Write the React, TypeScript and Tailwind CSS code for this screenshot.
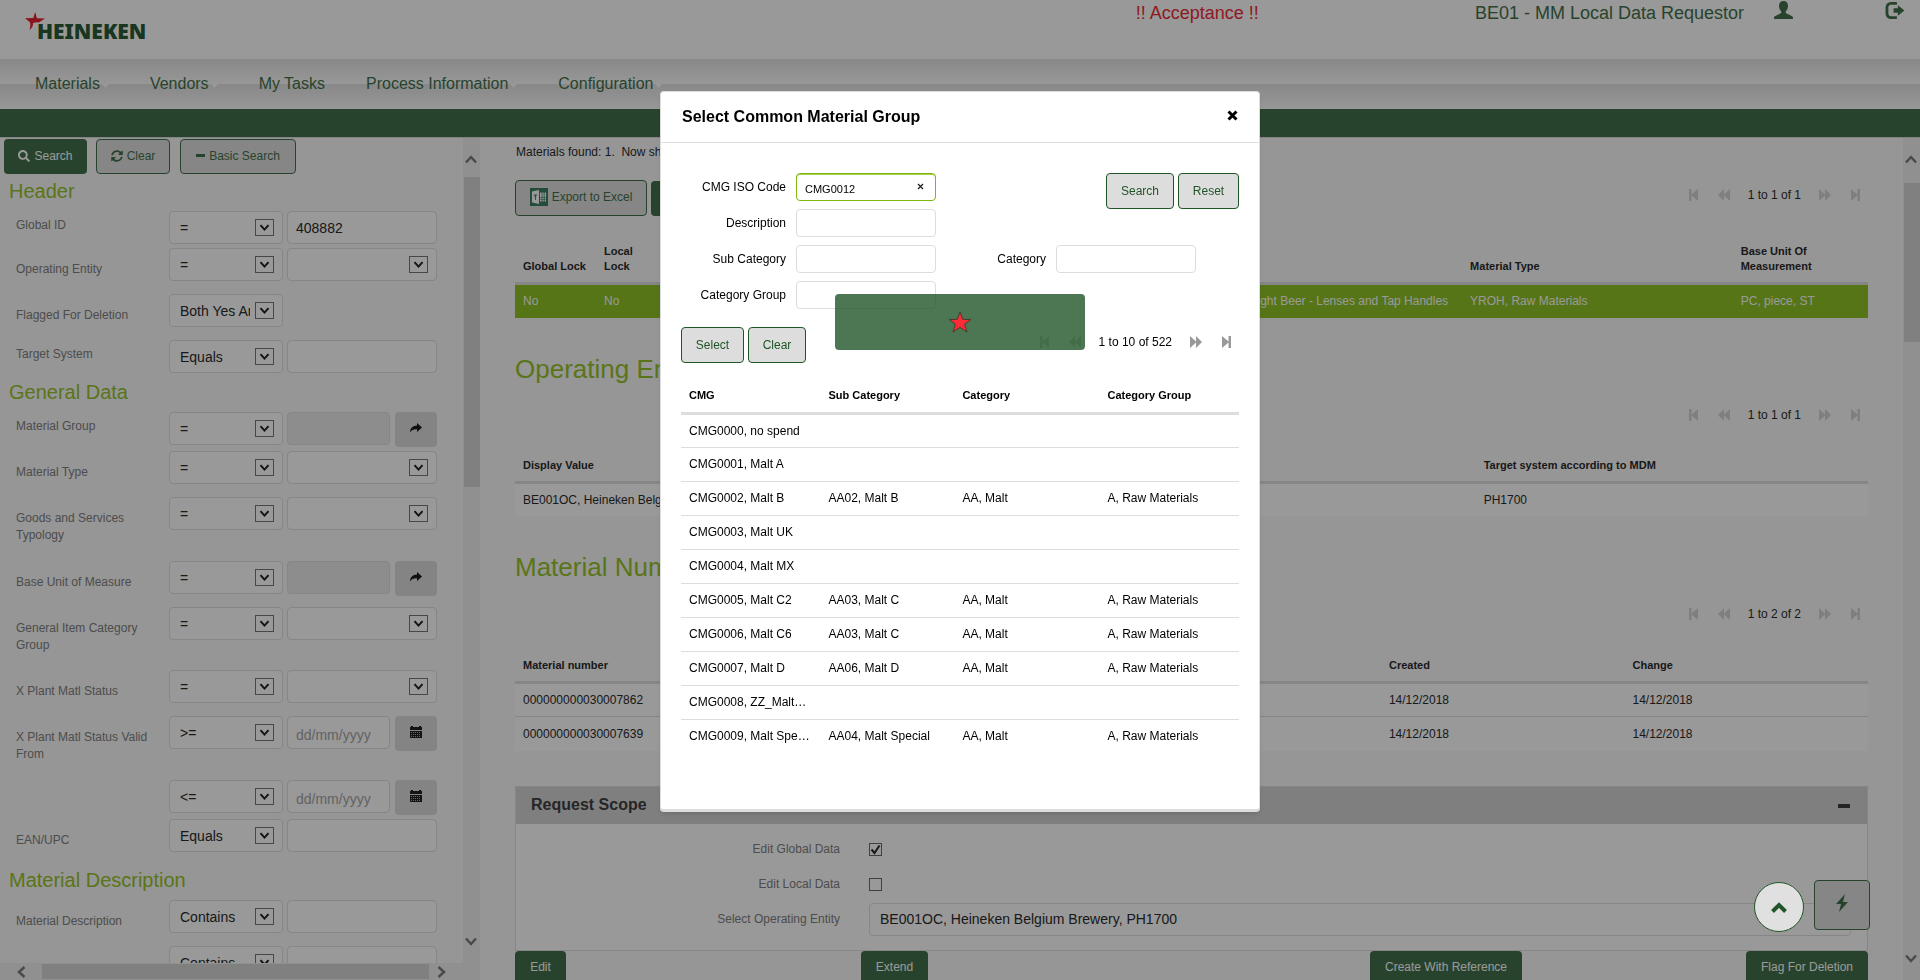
import React from "react";
import { FaSearch, FaSyncAlt } from "react-icons/fa";

type IconProps = { className?: string };

/* ---------- icons ---------- */

const Star = ({ className }: IconProps) => (
  <svg className={className} viewBox="0 0 24 22" aria-hidden="true">
    <path d="M12 1l2.8 7.4H23l-6.5 4.8 2.6 7.8-7.1-4.6L4.9 21l2.6-7.8L1 8.400h8.200z" fill="#fb2c36" stroke="#4a3a2c" strokeWidth="1" />
  </svg>
);

const LogoStar = ({ className }: IconProps) => (
  <svg className={className} viewBox="0 0 20 18" aria-hidden="true">
    <path d="M10.200 0l1.700 6.200 8.100.2-5 3.300-1 .9-2.300-.3-3.700.6c.4 2.400-.9 5.200-3.600 7.100 1.100-2.700 1.100-4.900.6-7.800L0 6.200l8.200-.1z" fill="#e5222e" />
  </svg>
);

const UserIcon = ({ className }: IconProps) => (
  <svg className={className} viewBox="0 0 19 18" fill="currentColor" aria-hidden="true">
    <path d="M9.500 0C12.300 0 14 2 14 4.800c0 2.200-.8 4.300-2.300 5.600v1.600l6 2.900c.9.400 1.300 1.200 1.300 2v1.100H0v-1.100c0-.8.4-1.600 1.300-2l6-2.900v-1.600C5.800 9.100 5 7 5 4.800 5 2 6.700 0 9.500 0z" />
  </svg>
);

const LogoutIcon = ({ className }: IconProps) => (
  <svg className={className} viewBox="0 0 20 18" aria-hidden="true">
    <path d="M12 1.500H5.500a4 4 0 0 0-4 4v7a4 4 0 0 0 4 4H12" fill="none" stroke="currentColor" strokeWidth="3" />
    <path d="M13 3.500l7 5.500-7 5.500v-3H8.500v-5H13z" fill="currentColor" />
  </svg>
);

const ExcelIcon = ({ className }: IconProps) => (
  <svg className={className} viewBox="0 0 18 18" aria-hidden="true">
    <rect width="18" height="18" fill="#3c7f63" />
    <path d="M2 3.500L9 2v14l-7-1.500z" fill="#fff" />
    <path d="M3.700 6.500h3.400L5.900 9v3H5V9z" fill="#3c7f63" />
    <path d="M10 4.500h1.600V13.500H10zM12.400 4.500h1.300v9h-1.300zM14.600 4.500H16v9h-1.400z" fill="#fff" />
    <path d="M10 9.500h6.500M10 11.500h6.500" stroke="#3c7f63" strokeWidth=".6" />
  </svg>
);

const ShareIcon = ({ className }: IconProps) => (
  <svg className={className} viewBox="0 0 12 10" fill="currentColor" aria-hidden="true">
    <path d="M7 0l5 4.500L7 9V6.300C3.800 6.100 1.600 7 0 9.500.2 5.200 2.600 2.800 7 2.600z" />
  </svg>
);

const CalendarIcon = ({ className }: IconProps) => (
  <svg className={className} viewBox="0 0 12 12" aria-hidden="true">
    <path d="M0 1h1V0h2v1h6V0h2v1h1v3H0zM0 5h12v7H0z" fill="currentColor" />
    <path d="M1 6.500h10M1 8.500h10M1 10.500h10" stroke="#a5a5a5" strokeWidth="1" strokeDasharray="1 1" />
  </svg>
);

const BoltIcon = ({ className }: IconProps) => (
  <svg className={className} viewBox="0 0 12 18" fill="currentColor" aria-hidden="true">
    <path d="M9 0L0 10h5L3 18l9-10H7z" />
  </svg>
);

const UpIcon = ({ className }: IconProps) => (
  <svg className={className} viewBox="0 0 16 11" aria-hidden="true">
    <path d="M1.500 9.500L8 3l6.500 6.500" fill="none" stroke="currentColor" strokeWidth="4" />
  </svg>
);

const CloseIcon = ({ className }: IconProps) => (
  <svg className={className} viewBox="0 0 11 11" aria-hidden="true">
    <path d="M1.500 1.500l8 8M9.500 1.500l-8 8" stroke="currentColor" strokeWidth="3" />
  </svg>
);

const Chevron = ({ className }: IconProps) => (
  <svg className={className} viewBox="0 0 12 10" aria-hidden="true">
    <path d="M1 1.500l5 5.500 5-5.500" fill="none" stroke="currentColor" strokeWidth="2.500" />
  </svg>
);

const StepEnd = ({ className }: IconProps) => (
  <svg className={className} viewBox="0 0 9 12" fill="currentColor" aria-hidden="true">
    <path d="M0 0l6.500 5.500V0H9v12H6.500V6.500L0 12z" />
  </svg>
);

const FastForward = ({ className }: IconProps) => (
  <svg className={className} viewBox="0 0 12 12" fill="currentColor" aria-hidden="true">
    <path d="M0 0l6 5.500V0l6 6-6 6V6.500L0 12z" />
  </svg>
);

/* ---------- shared controls ---------- */

const outlineBtn =
  "flex items-center justify-center gap-1 rounded border border-[#43714b] bg-[#e0e0e0] pb-0.5 text-xs text-[#43714b]";
const solidBtn = "flex items-center justify-center gap-1 rounded bg-[#43714b] pb-0.5 text-xs text-white";
const modalBtn =
  "flex h-9 items-center justify-center rounded border border-[#205527] bg-[#ddd] text-xs text-[#205527]";
const field = "h-[33px] w-full min-w-0 rounded border border-[#dfdfdf] bg-white text-sm text-[#2b2b2b]";

function Select({ id, value, label }: { id?: string; value: string; label?: string }) {
  return (
    <div className="relative w-full">
      <select id={id} aria-label={label} defaultValue={value} className={`${field} appearance-none pr-8 pl-[10px]`}>
        <option value={value}>{value}</option>
      </select>
      <span className="pointer-events-none absolute top-2 right-[9px] flex h-[17px] w-[19px] items-center justify-center border border-[#777]">
        <Chevron className="h-2 w-[11px] text-[#222]" />
      </span>
    </div>
  );
}

type Kind = "text" | "select" | "lookup" | "date" | "none";
type Row = { label: string; op: string; kind: Kind; value?: string; height: string; pad: string };

function FilterRow({ row, id }: { row: Row; id: string }) {
  const name = row.label || "Valid until";
  return (
    <div className={`flex shrink-0 items-start pr-[26px] pl-4 ${row.height}`}>
      <label htmlFor={id} className={`w-[153px] shrink-0 pr-3 text-xs leading-[17px] text-[#808080] ${row.pad}`}>
        {row.label}
      </label>
      <div className="mr-1 w-[114px] shrink-0">
        <Select value={row.op} label={`${name} operator`} />
      </div>
      <div className="flex min-w-0 flex-1 gap-[5px]">
        {row.kind === "text" && <input id={id} aria-label={name} defaultValue={row.value} className={`${field} px-2`} />}
        {row.kind === "select" && <Select id={id} value="" label={name} />}
        {row.kind === "lookup" && (
          <>
            <input id={id} readOnly aria-label={name} className="h-[33px] w-full min-w-0 rounded border border-[#dfdfdf] bg-[#ececec] px-2" />
            <button aria-label={`Choose ${name}`} className="flex h-[35px] w-[42px] shrink-0 items-center justify-center rounded bg-[#ddd] pb-1 text-[#1c1c1c]">
              <ShareIcon className="h-[10px] w-3" />
            </button>
          </>
        )}
        {row.kind === "date" && (
          <>
            <input id={id} aria-label={name} placeholder="dd/mm/yyyy" className={`${field} px-2 pt-1 placeholder:text-[#a5a5a5]`} />
            <button aria-label={`Pick date for ${name}`} className="flex h-[35px] w-[42px] shrink-0 items-center justify-center rounded bg-[#ddd] pb-1 text-[#222]">
              <CalendarIcon className="size-3" />
            </button>
          </>
        )}
      </div>
    </div>
  );
}

const near = "pt-1.5";
const far = "pt-[13px]";
const sections: { title: string; rows: Row[] }[] = [
  {
    title: "Header",
    rows: [
      { label: "Global ID", op: "=", kind: "text", value: "408882", height: "h-[37px]", pad: near },
      { label: "Operating Entity", op: "=", kind: "select", height: "h-[46px]", pad: far },
      { label: "Flagged For Deletion", op: "Both Yes And No", kind: "none", height: "h-[46px]", pad: far },
      { label: "Target System", op: "Equals", kind: "text", height: "h-[35px]", pad: near },
    ],
  },
  {
    title: "General Data",
    rows: [
      { label: "Material Group", op: "=", kind: "lookup", height: "h-[39px]", pad: near },
      { label: "Material Type", op: "=", kind: "select", height: "h-[46px]", pad: far },
      { label: "Goods and Services Typology", op: "=", kind: "select", height: "h-[64px]", pad: far },
      { label: "Base Unit of Measure", op: "=", kind: "lookup", height: "h-[46px]", pad: far },
      { label: "General Item Category Group", op: "=", kind: "select", height: "h-[63px]", pad: far },
      { label: "X Plant Matl Status", op: "=", kind: "select", height: "h-[46px]", pad: far },
      { label: "X Plant Matl Status Valid From", op: ">=", kind: "date", height: "h-[64px]", pad: far },
      { label: "", op: "<=", kind: "date", height: "h-[39px]", pad: far },
      { label: "EAN/UPC", op: "Equals", kind: "text", height: "h-[44px]", pad: far },
    ],
  },
  {
    title: "Material Description",
    rows: [
      { label: "Material Description", op: "Contains", kind: "text", height: "h-[46px]", pad: far },
      { label: "", op: "Contains", kind: "text", height: "h-[46px]", pad: far },
    ],
  },
];

function Pager({ text, back, forward, gap }: { text: string; back: string; forward: string; gap: string }) {
  return (
    <div className={`flex h-[30px] items-center pr-2 text-xs ${gap}`}>
      <button aria-label="First page" className={back}><StepEnd className="h-3 w-[9px] rotate-180" /></button>
      <button aria-label="Previous page" className={`ml-5 ${back}`}><FastForward className="size-3 rotate-180" /></button>
      <span className="mr-[18px] ml-[18px]">{text}</span>
      <button aria-label="Next page" className={forward}><FastForward className="size-3" /></button>
      <button aria-label="Last page" className={`ml-5 ${forward}`}><StepEnd className="h-3 w-[9px]" /></button>
    </div>
  );
}

const MainPager = ({ text }: { text: string }) => (
  <Pager text={text} back="text-[#d4d4d4]" forward="text-[#d4d4d4]" gap="justify-end" />
);

const mainTh = "border-b-[3px] border-[#dfdfdf] px-2 pt-[10px] pb-2 text-left align-bottom text-[11px] leading-[15px] font-bold";
const mainTd = "h-[34px] overflow-hidden px-2 text-xs whitespace-nowrap";
const heading = "mt-[33px] text-[26px] leading-9 text-[#96c32b]";

/* ---------- page regions ---------- */

function TopBar() {
  return (
    <header className="flex h-[59px] shrink-0 items-start bg-white pr-[15px] pl-[25px] text-lg leading-6 text-[#43714b]">
      <a href="#home" aria-label="Heineken home" className="relative flex pt-3">
        <LogoStar className="h-[18px] w-5" />
        <span className="absolute top-[21px] left-3 font-['Noto_Sans'] text-[21px] leading-5 font-black text-[#285b36]">HEINEKEN</span>
      </a>
      <span className="mt-px mr-[216px] ml-auto text-[#ef2b36]">!! Acceptance !!</span>
      <span className="mt-px">BE01 - MM Local Data Requestor</span>
      <a href="#profile" aria-label="Profile" className="mt-px ml-[30px]"><UserIcon className="h-[18px] w-[19px]" /></a>
      <a href="#logout" aria-label="Log out" className="mt-0.5 ml-[92px]"><LogoutIcon className="h-[17px] w-5" /></a>
    </header>
  );
}

const menu = [
  { name: "Materials", arrow: true },
  { name: "Vendors", arrow: true },
  { name: "My Tasks", arrow: false },
  { name: "Process Information", arrow: true },
  { name: "Configuration", arrow: true },
];

function Nav() {
  return (
    <nav className="h-[50px] shrink-0 bg-linear-to-b from-[#e3e3e3] to-[#fdfdfd] bg-[length:100%_25px] bg-repeat-y">
      <ul className="flex h-full items-center gap-[41px] pl-[35px] text-base text-[#43714b]">
        {menu.map((m) => (
          <li key={m.name}>
            <a href="#menu" className="flex items-center">
              {m.name}
              {m.arrow && (
                <svg className="mt-1 ml-0.5 h-1 w-[7px]" viewBox="0 0 7 4" aria-hidden="true">
                  <path d="M0 0h7L3.500 4z" fill="#fdfdfd" />
                </svg>
              )}
            </a>
          </li>
        ))}
      </ul>
    </nav>
  );
}

function Sidebar() {
  return (
    <aside className="flex w-1/4 shrink-0 flex-col">
      <div className="flex min-h-0 flex-1">
        <form className="flex min-w-0 flex-1 flex-col overflow-hidden pt-px" onSubmit={(e) => e.preventDefault()}>
          <div className="flex h-[35px] shrink-0 pl-1">
            <button className={`${solidBtn} w-[83px]`}><FaSearch className="size-3" />Search</button>
            <button className={`${outlineBtn} ml-[9px] w-[74px]`}><FaSyncAlt className="size-3" />Clear</button>
            <button className={`${outlineBtn} ml-[10px] w-[116px]`}><span className="h-[3px] w-[9px] bg-[#43714b]" />Basic Search</button>
          </div>
          {sections.map((s) => (
            <React.Fragment key={s.title}>
              <h2 className="mt-[3px] mb-1.5 shrink-0 pl-[9px] text-xl leading-7 text-[#96c32b]">{s.title}</h2>
              {s.rows.map((r, i) => (
                <FilterRow key={i} row={r} id={`${s.title.replace(/ /g, "-")}-${i}`} />
              ))}
            </React.Fragment>
          ))}
        </form>
        <div className="flex w-[17px] shrink-0 flex-col items-end bg-[#f1f1f1]">
          <Chevron className="mt-4 mr-[3px] h-[10px] w-3 shrink-0 rotate-180 text-[#7c7c7c]" />
          <div className="mt-[13px] h-[310px] w-4 bg-[#d5d5d5]" />
          <Chevron className="mt-auto mr-[3px] mb-4 h-[10px] w-3 shrink-0 text-[#7c7c7c]" />
        </div>
      </div>
      <div className="flex h-[17px] shrink-0 items-center bg-[#f1f1f1] pr-8 pl-[15px]">
        <Chevron className="h-[10px] w-3 rotate-90 text-[#7c7c7c]" />
        <div className="mr-[7px] ml-[15px] h-[15px] flex-1 bg-[#d5d5d5]" />
        <Chevron className="h-[10px] w-3 -rotate-90 text-[#7c7c7c]" />
      </div>
    </aside>
  );
}

const scopeLabel = "w-[324px] shrink-0 text-right text-xs text-[#808080]";

function CheckRow({ id, label, checked }: { id: string; label: string; checked: boolean }) {
  return (
    <div className="flex h-[35px] items-center">
      <label htmlFor={id} className={scopeLabel}>{label}</label>
      <span className="relative ml-[29px] size-[13px]">
        <input id={id} type="checkbox" defaultChecked={checked} className="peer block size-[13px] appearance-none border border-[#6b6b6b] bg-white" />
        <svg viewBox="0 0 13 13" className="pointer-events-none absolute inset-0 hidden text-[#2b2b2b] peer-checked:block" aria-hidden="true">
          <path d="M2.500 6.500l3 3.500L10.500 2.500" fill="none" stroke="currentColor" strokeWidth="2" />
        </svg>
      </span>
    </div>
  );
}

function Results() {
  return (
    <main className="min-w-0 flex-1 overflow-hidden px-[35px] pt-1.5 text-[#2b2b2b]">
      <p className="pl-px text-xs leading-4 whitespace-pre">Materials found: 1.  Now showing: 1</p>
      <div className="mt-5 flex h-9 items-start">
        <button className={`${outlineBtn} h-9 w-[132px]`}><ExcelIcon className="size-[18px]" />Export to Excel</button>
        <button className={`${solidBtn} mt-px ml-1 h-[35px] px-4`}>Request</button>
        <div className="ml-auto"><MainPager text="1 to 1 of 1" /></div>
      </div>
      <table className="mt-[18px] w-full table-fixed">
        <thead>
          <tr>
            <th className={`${mainTh} w-[81px] whitespace-nowrap`}>Global Lock</th>
            <th className={`${mainTh} w-[64px]`}>Local Lock</th>
            <th className={mainTh} aria-label="Description" />
            <th className={`${mainTh} w-1/5`}>Material Type</th>
            <th className={`${mainTh} w-1/10`}>Base Unit Of Measurement</th>
          </tr>
        </thead>
        <tbody>
          <tr className="bg-[#8ec326] text-white">
            <td className={mainTd}>No</td>
            <td className={mainTd}>No</td>
            <td className={`${mainTd} text-right`}><span className="pr-1.5">Draught Beer - Lenses and Tap Handles</span></td>
            <td className={mainTd}>YROH, Raw Materials</td>
            <td className={mainTd}>PC, piece, ST</td>
          </tr>
        </tbody>
      </table>

      <h2 className={heading}>Operating Entities</h2>
      <div className="mt-[13px]"><MainPager text="1 to 1 of 1" /></div>
      <table className="mt-[18px] w-full table-fixed">
        <thead>
          <tr>
            <th className={mainTh}>Display Value</th>
            <th className={`${mainTh} w-[29%]`}>Target system according to MDM</th>
          </tr>
        </thead>
        <tbody>
          <tr className="bg-white">
            <td className={mainTd}>BE001OC, Heineken Belgium Brewery</td>
            <td className={mainTd}>PH1700</td>
          </tr>
        </tbody>
      </table>

      <h2 className={heading}>Material Numbers</h2>
      <div className="mt-[14px]"><MainPager text="1 to 2 of 2" /></div>
      <table className="mt-[19px] w-full table-fixed">
        <thead>
          <tr>
            <th className={mainTh}>Material number</th>
            <th className={`${mainTh} w-[18%]`}>Created</th>
            <th className={`${mainTh} w-[18%]`}>Change</th>
          </tr>
        </thead>
        <tbody>
          {["000000000030007862", "000000000030007639"].map((n) => (
            <tr key={n} className="border-[#dfdfdf] bg-white not-last:border-b">
              <td className={mainTd}>{n}</td>
              <td className={mainTd}>14/12/2018</td>
              <td className={mainTd}>14/12/2018</td>
            </tr>
          ))}
        </tbody>
      </table>

      <section className="mt-[35px] border border-[#dfdfdf] bg-white">
        <div className="flex h-[37px] items-center justify-between bg-[#d4d4d4] pr-[17px] pl-[15px]">
          <h3 className="text-base font-bold text-[#404040]">Request Scope</h3>
          <button aria-label="Collapse" className="mt-0.5 h-1 w-3 bg-[#3d3d3d]" />
        </div>
        <div className="pt-2 pr-4 pb-[13px]">
          <CheckRow id="edit-global" label="Edit Global Data" checked />
          <CheckRow id="edit-local" label="Edit Local Data" checked={false} />
          <div className="flex h-[35px] items-center">
            <label htmlFor="select-entity" className={scopeLabel}>Select Operating Entity</label>
            <input id="select-entity" defaultValue="BE001OC, Heineken Belgium Brewery, PH1700" className={`${field} ml-[29px] px-[10px]`} />
          </div>
        </div>
      </section>
      <div className="grid grid-cols-[346fr_509fr_376fr_122fr]">
        <button className={`${solidBtn} h-[35px] w-[51px]`}>Edit</button>
        <button className={`${solidBtn} h-[35px] w-[67px]`}>Extend</button>
        <button className={`${solidBtn} h-[35px] w-[152px]`}>Create With Reference</button>
        <button className={`${solidBtn} h-[35px] w-full whitespace-nowrap`}>Flag For Deletion</button>
      </div>
    </main>
  );
}

/* ---------- dialog ---------- */

const RAW = "A, Raw Materials";
const groups: [string, string, string, string][] = [
  ["CMG0000, no spend", "", "", ""],
  ["CMG0001, Malt A", "", "", ""],
  ["CMG0002, Malt B", "AA02, Malt B", "AA, Malt", RAW],
  ["CMG0003, Malt UK", "", "", ""],
  ["CMG0004, Malt MX", "", "", ""],
  ["CMG0005, Malt C2", "AA03, Malt C", "AA, Malt", RAW],
  ["CMG0006, Malt C6", "AA03, Malt C", "AA, Malt", RAW],
  ["CMG0007, Malt D", "AA06, Malt D", "AA, Malt", RAW],
  ["CMG0008, ZZ_Malt…", "", "", ""],
  ["CMG0009, Malt Spe…", "AA04, Malt Special", "AA, Malt", RAW],
];

const modalLabel = "w-[105px] shrink-0 text-right text-xs";
const modalField = "ml-[10px] h-7 w-[140px] rounded border border-[#ddd] bg-white px-2 text-[11px]";
const modalTh = "h-[50px] border-b-[3px] border-[#ddd] px-2 pt-4 text-left text-[11px] font-bold";

function Dialog() {
  return (
    <div role="dialog" aria-modal="true" aria-labelledby="dialog-title" className="mt-[91px] h-fit w-[600px] rounded border border-[#ddd] border-b-[3px] bg-white text-black shadow-md">
      <div className="flex h-[51px] items-center justify-between border-b border-[#ddd] px-[21px]">
        <h2 id="dialog-title" className="text-base font-bold">Select Common Material Group</h2>
        <button aria-label="Close" className="mb-1"><CloseIcon className="size-[11px]" /></button>
      </div>
      <div className="px-5 pt-[30px] pb-[56px]">
        <div className="flex flex-col gap-2">
          <div className="flex h-7 items-center">
            <label htmlFor="cmg-code" className={modalLabel}>CMG ISO Code</label>
            <div className="relative ml-[10px]">
              <input id="cmg-code" defaultValue="CMG0012" className="block h-7 w-[140px] rounded border border-[#80b70f] bg-white px-2 pt-1 text-[11px] shadow-[inset_0_1px_0_#a6d04a]" />
              <button aria-label="Clear code" className="absolute top-[10px] right-3"><svg viewBox="0 0 7 7" className="size-[7px]" aria-hidden="true"><path d="M1 1l5 5M6 1L1 6" stroke="#222" strokeWidth="1.300" /></svg></button>
            </div>
            <div className="ml-auto flex gap-1 self-start">
              <button className={`${modalBtn} w-[68px]`}>Search</button>
              <button className={`${modalBtn} w-[61px]`}>Reset</button>
            </div>
          </div>
          <div className="flex items-center">
            <label htmlFor="description" className={modalLabel}>Description</label>
            <input id="description" className={modalField} />
          </div>
          <div className="flex items-center">
            <label htmlFor="sub-category" className={modalLabel}>Sub Category</label>
            <input id="sub-category" className={modalField} />
            <label htmlFor="category" className={`${modalLabel} ml-[5px]`}>Category</label>
            <input id="category" className={modalField} />
          </div>
          <div className="flex items-center">
            <label htmlFor="category-group" className={modalLabel}>Category Group</label>
            <input id="category-group" className={modalField} />
          </div>
        </div>
        <div className="mt-[18px] flex items-start">
          <button className={`${modalBtn} w-[63px]`}>Select</button>
          <button className={`${modalBtn} ml-1 w-[58px]`}>Clear</button>
          <div className="ml-auto">
            <Pager text="1 to 10 of 522" back="text-[#ccc]" forward="text-[#999]" gap="" />
          </div>
        </div>
        <table className="w-full table-fixed text-xs">
          <thead>
            <tr>
              <th className={`${modalTh} w-1/4`}>CMG</th>
              <th className={`${modalTh} w-[24%]`}>Sub Category</th>
              <th className={`${modalTh} w-[26%]`}>Category</th>
              <th className={modalTh}>Category Group</th>
            </tr>
          </thead>
          <tbody>
            {groups.map((g) => (
              <tr key={g[0]} className="border-[#ddd] not-last:border-b">
                {g.map((c, i) => (
                  <td key={i} className="h-[34px] px-2 whitespace-nowrap">{c}</td>
                ))}
              </tr>
            ))}
          </tbody>
        </table>
      </div>
    </div>
  );
}

export default function App() {
  return (
    <div className="flex h-screen flex-col overflow-hidden bg-[#fafafa] font-['Liberation_Sans',Arial,sans-serif]">
      <TopBar />
      <Nav />
      <div className="h-[29px] shrink-0 border-b border-[#dcdcdc] bg-[#43714b]" />
      <div className="flex min-h-0 flex-1">
        <Sidebar />
        <Results />
        <div className="flex w-[17px] shrink-0 flex-col items-end bg-[#f1f1f1]">
          <Chevron className="mt-4 mr-[3px] h-[10px] w-3 shrink-0 rotate-180 text-[#7c7c7c]" />
          <div className="mt-[19px] h-[159px] w-4 bg-[#d5d5d5]" />
          <Chevron className="mt-auto mr-[3px] mb-4 h-[10px] w-3 shrink-0 text-[#7c7c7c]" />
        </div>
      </div>
      <button aria-label="Quick actions" className="fixed right-[50px] bottom-[50px] z-10 flex h-[50px] w-14 items-center justify-center rounded border border-[#43714b] bg-[#e0e0e0] text-[#43714b]">
        <BoltIcon className="mb-1 h-[18px] w-3" />
      </button>
      <div className="fixed inset-0 z-20 flex justify-center bg-black/40">
        <Dialog />
      </div>
      <button aria-label="Back to top" className="fixed right-[116px] bottom-12 z-30 flex size-[50px] items-center justify-center rounded-full border border-[#205527] bg-[#e0e0e0] text-[#205527]">
        <UpIcon className="h-[11px] w-4" />
      </button>
      <div role="status" aria-label="Loading" className="fixed top-[294px] left-1/2 z-30 flex h-14 w-[250px] -translate-x-1/2 items-center justify-center rounded bg-[#205527]/80">
        <Star className="h-[22px] w-6" />
      </div>
    </div>
  );
}
